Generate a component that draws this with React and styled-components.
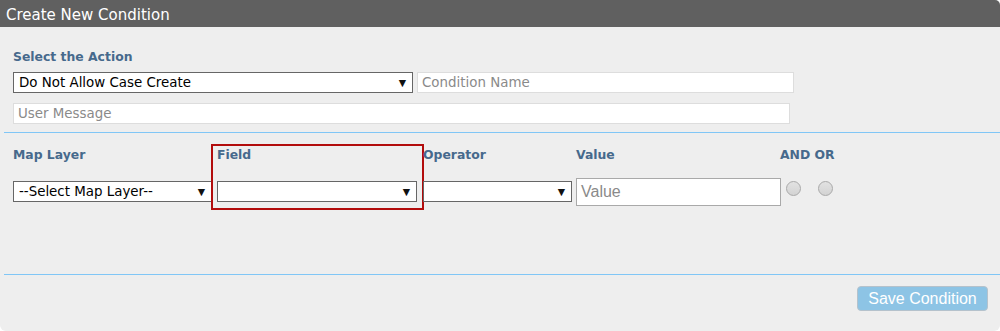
import React from 'react'
import styled, { createGlobalStyle } from 'styled-components'

const GlobalStyle = createGlobalStyle`
  html, body {
    margin: 0;
    padding: 0;
    background: #ffffff;
  }
  body {
    font-family: "DejaVu Sans", Verdana, sans-serif;
  }
`

const StyledPanel = styled.div`
  width: 1000px;
  height: 331px;
  background: #eeeeee;
  border-radius: 0 5px 6px 6px;
  overflow: hidden;
  display: flex;
  flex-direction: column;
`

const StyledHeader = styled.div`
  height: 27px;
  box-sizing: border-box;
  padding: 3px 0 0 6px;
  background: #606060;
  color: #ffffff;
  font-size: 15px;
  line-height: 24px;
  flex-shrink: 0;
`

const StyledSection = styled.div`
  display: flex;
  flex-direction: column;
  padding: ${({ pad }) => pad || '0 0 0 13px'};
`

const StyledLabel = styled.div`
  font-size: 12.4px;
  font-weight: bold;
  line-height: 16px;
  color: #46698c;
  white-space: nowrap;
`

const StyledRow = styled.div`
  display: flex;
  align-items: flex-start;
  gap: ${({ gap }) => gap || '0px'};
  margin-top: ${({ top }) => top || '0px'};
`

const StyledSelect = styled.div`
  box-sizing: border-box;
  width: ${({ width }) => width};
  height: 21px;
  display: flex;
  align-items: center;
  justify-content: space-between;
  padding: 0 6px 0 5px;
  background: #ffffff;
  border: 1px solid #666666;
  font-size: 13.4px;
  color: #000000;
  white-space: nowrap;
  overflow: hidden;
`

const StyledArrow = styled.span`
  font-family: "DejaVu Sans", sans-serif;
  font-size: 9.5px;
  color: #111111;
`

const StyledInput = styled.div`
  box-sizing: border-box;
  width: ${({ width }) => width};
  height: ${({ height }) => height || '21px'};
  display: flex;
  align-items: center;
  padding: 0 4px;
  background: #ffffff;
  border: 1px solid ${({ border }) => border || '#dddddd'};
  font-family: ${({ arial }) => (arial ? '"Liberation Sans", Arial, sans-serif' : 'inherit')};
  font-size: ${({ size }) => size || '13.4px'};
  color: #8a8a8a;
  white-space: nowrap;
`

const StyledDivider = styled.div`
  height: 1px;
  margin-left: 4px;
  background: #80c6f6;
  flex-shrink: 0;
`

const StyledConditionArea = styled.div`
  height: 141px;
  box-sizing: border-box;
  padding: 11px 0 0 13px;
  display: flex;
  align-items: flex-start;
`

const StyledColumn = styled.div`
  display: flex;
  flex-direction: column;
  width: ${({ width }) => width};
  margin-left: ${({ shift }) => shift || '0px'};
  padding-top: 3px;
`

const StyledFieldBox = styled.div`
  box-sizing: border-box;
  width: 213px;
  display: flex;
  flex-direction: column;
  padding: 1px 5px 6px 4px;
  border: 2px solid #b20c0c;
`

const StyledGap = styled.div`
  height: ${({ h }) => h};
`

const StyledRadios = styled.div`
  display: flex;
  gap: 17px;
  padding-left: 6px;
  margin-top: 18px;
`

const StyledRadio = styled.span`
  box-sizing: border-box;
  width: 15px;
  height: 15px;
  border-radius: 50%;
  border: 1px solid #a9a9a9;
  background: linear-gradient(#e2e2e2, #d3d3d3);
`

const StyledFooter = styled.div`
  display: flex;
  justify-content: flex-end;
  padding: 11px 12px 0 0;
`

const StyledButton = styled.button`
  width: 131px;
  height: 25px;
  padding: 0;
  background: #8dc4e5;
  border: 1px solid #b5c2cc;
  border-radius: 4px;
  color: #ffffff;
  font-family: "Liberation Sans", Arial, sans-serif;
  font-size: 16px;
  line-height: 23px;
`

const Select = ({ width, children }) => (
  <StyledSelect width={width}>
    <span>{children}</span>
    <StyledArrow>▼</StyledArrow>
  </StyledSelect>
)

const App = () => (
  <>
    <GlobalStyle />
    <StyledPanel>
      <StyledHeader>Create New Condition</StyledHeader>

      <StyledSection pad="22px 0 0 13px">
        <StyledLabel>Select the Action</StyledLabel>
        <StyledRow gap="4px" top="7px">
          <Select width="400px">Do Not Allow Case Create</Select>
          <StyledInput width="377px">Condition Name</StyledInput>
        </StyledRow>
        <StyledRow top="10px">
          <StyledInput width="777px">User Message</StyledInput>
        </StyledRow>
      </StyledSection>

      <StyledGap h="8px" />
      <StyledDivider />

      <StyledConditionArea>
        <StyledColumn width="198px">
          <StyledLabel>Map Layer</StyledLabel>
          <StyledGap h="18px" />
          <Select width="199px">--Select Map Layer--</Select>
        </StyledColumn>

        <StyledFieldBox>
          <StyledLabel>Field</StyledLabel>
          <StyledGap h="18px" />
          <Select width="200px" />
        </StyledFieldBox>

        <StyledColumn width="154px" shift="-1px">
          <StyledLabel>Operator</StyledLabel>
          <StyledGap h="18px" />
          <Select width="149px" />
        </StyledColumn>

        <StyledColumn width="204px" shift="-1px">
          <StyledLabel>Value</StyledLabel>
          <StyledGap h="15px" />
          <StyledInput width="205px" height="28px" border="#a9a9a9" size="16px" arial>
            Value
          </StyledInput>
        </StyledColumn>

        <StyledColumn width="80px">
          <StyledLabel>AND OR</StyledLabel>
          <StyledRadios>
            <StyledRadio />
            <StyledRadio />
          </StyledRadios>
        </StyledColumn>
      </StyledConditionArea>

      <StyledDivider />

      <StyledFooter>
        <StyledButton>Save Condition</StyledButton>
      </StyledFooter>
    </StyledPanel>
  </>
)

export default App
